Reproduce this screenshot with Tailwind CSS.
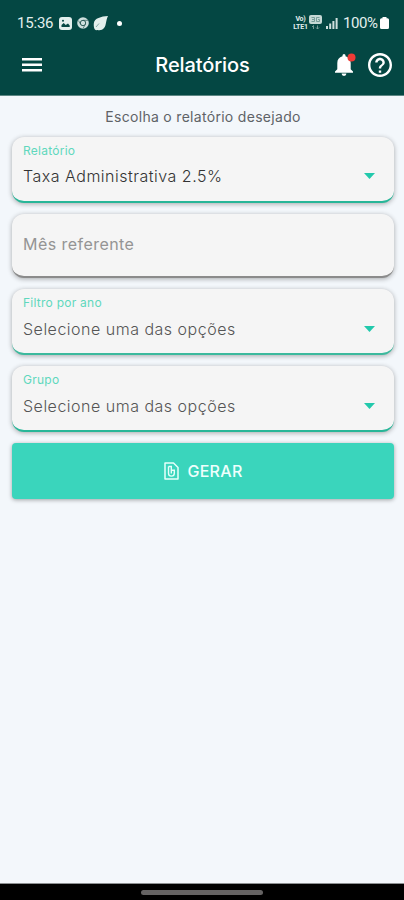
<!DOCTYPE html>
<html lang="pt-BR">
<head>
  <meta charset="UTF-8" />
  <meta name="viewport" content="width=device-width, initial-scale=1.0" />
  <title>Relatórios</title>
  <script src="https://cdn.jsdelivr.net/npm/@tailwindcss/browser@4"></script>
</head>
<body class="bg-[#f3f7fb] font-['Inter',sans-serif]">
  <div class="h-[900px] flex flex-col overflow-hidden">

    <header class="h-24 shrink-0 bg-[#044743] text-white border-b border-[#5d8784]">
      <!-- Status bar -->
      <div class="h-[46px] pl-[17px] pr-[15px] flex items-center justify-between text-[#e3efed]">
        <div class="flex items-center">
          <span class="w-[37px] font-['Roboto',sans-serif] text-[15px] leading-none tracking-[-0.2px] whitespace-nowrap">15:36</span>
          <svg class="ml-[5px] w-[13px] h-[13px]" viewBox="0 0 13 13">
            <rect width="13" height="13" rx="3" fill="currentColor" />
            <path d="M2.5 10V8l2.2-2 2 2L9 6.500l1.700 2V10z" fill="#044743" />
            <circle cx="4" cy="3.800" r="1" fill="#044743" />
          </svg>
          <svg class="ml-[5px] w-3 h-3" viewBox="0 0 12 12">
            <circle cx="6" cy="6" r="5.800" fill="#cfe0de" />
            <circle cx="6" cy="6" r="2.700" fill="none" stroke="#315f5b" stroke-width="1" />
            <path d="M6 3.300h5M3.700 7.300 1.400 3.500M8.300 7.400 6 11.500" stroke="#315f5b" stroke-width=".7" />
          </svg>
          <svg class="ml-1 w-[15px] h-[15px]" viewBox="0 0 15 15">
            <path d="M15 0C8 .5 1.500 2 .8 7.500c-.2 2 .1 4 .7 5.500.9 1.200 2 1.300 3 1 2.500.5 5 0 6.500-2C13.500 9.200 12.600 5 15 0z" fill="currentColor" />
            <path d="M3 11 6 7.500" stroke="#6d9692" stroke-width=".8" />
          </svg>
          <span class="ml-[9px] w-[5px] h-[5px] rounded-full bg-white"></span>
        </div>
        <div class="flex items-center">
          <div class="w-[17px] flex flex-col items-center gap-px font-['Roboto',sans-serif] font-bold text-[7px] leading-[7px] tracking-[-0.2px]">
            <span>Vo)</span>
            <span>LTE1</span>
          </div>
          <svg class="w-[13px] h-[15px] mb-[2px]" viewBox="0 0 13 15">
            <rect y="0" width="13" height="9" rx="2" fill="#c5d8d5" />
            <path d="M2.500 2.500h3v2h-2.500M5.500 4.500v2h-3M10.500 2.500h-3v4h3v-2h-1.500" fill="none" stroke="#6d9692" stroke-width=".9" />
            <path d="M4.500 14v-3.500M3 12l1.500-1.500M8.500 10.500V14M7 12.500 8.500 14 10 12.500" fill="none" stroke="#7fa29e" stroke-width=".9" />
          </svg>
          <svg class="ml-[4px] w-3 h-[11px]" viewBox="0 0 12 11" fill="#cfe0de">
            <rect x="0" y="8" width="2" height="3" />
            <rect x="3.200" y="5.500" width="2" height="5.500" />
            <rect x="6.400" y="3" width="2" height="8" />
            <rect x="9.600" y="0" width="2" height="11" />
          </svg>
          <span class="ml-[5px] w-[37px] font-['Roboto',sans-serif] text-[15px] leading-none tracking-[-0.4px] whitespace-nowrap">100%</span>
          <svg class="w-[9px] h-3" viewBox="0 0 9 12">
            <path d="M2.500 0h4v1.300H7.500A1.500 1.500 0 0 1 9 2.800v7.700A1.500 1.500 0 0 1 7.500 12h-6A1.500 1.500 0 0 1 0 10.500V2.800a1.500 1.500 0 0 1 1.500-1.500h1z" fill="#fff" />
          </svg>
        </div>
      </div>

      <!-- App bar -->
      <div class="h-[38px] pl-[22px] pr-3 grid grid-cols-[60px_1fr_60px] items-center">
        <svg class="w-5 h-4" viewBox="0 0 20 16" fill="#fff">
          <rect y="1" width="20" height="2.500" />
          <rect y="6.500" width="20" height="2.500" />
          <rect y="12" width="20" height="2.500" />
        </svg>
        <h1 class="pr-[9px] text-center text-xl leading-none font-medium tracking-[-0.1px]">Relatórios</h1>
        <div class="flex items-center justify-end gap-[11px]">
          <svg class="w-[23px] h-6 shrink-0" viewBox="0 0 23 24">
            <path d="M8.500 2.500a1.500 1.500 0 0 1 3 0v.8c3.500.8 5.200 3.300 5.200 6.700v6.200l2.300 2.300v1.200H1v-1.200l2.300-2.300V10C3.300 6.600 5 4.100 8.500 3.300z" fill="#fff" />
            <path d="M7.600 20.500h4.800a2.400 2.400 0 0 1-4.800 0z" fill="#fff" />
            <circle cx="17.500" cy="4.500" r="4" fill="#ef3b36" />
          </svg>
          <svg class="w-6 h-6 shrink-0" viewBox="2 2 20 20" fill="#fff">
            <path d="M11 16.500h2v2h-2zM12 2C6.480 2 2 6.480 2 12s4.480 10 10 10 10-4.480 10-10S17.520 2 12 2zm0 18c-4.410 0-8-3.590-8-8s3.590-8 8-8 8 3.590 8 8-3.590 8-8 8zm0-14c-2.210 0-4 1.790-4 4h2c0-1.100.9-2 2-2s2 .9 2 2c0 2-3 1.750-3 5h2c0-2.250 3-2.500 3-5 0-2.210-1.790-4-4-4z" />
          </svg>
        </div>
      </div>
    </header>

    <main class="flex-1 pl-3 pr-[10px] pt-[11px]">
      <p class="h-5 text-center text-[14px] leading-5 tracking-[0.3px] text-[#5f6367]">Escolha o relatório desejado</p>

      <div class="mt-[10px] flex flex-col gap-[11px]">
        <div class="h-[66px] px-[11px] pt-[6px] flex flex-col bg-[#f5f5f5] rounded-xl border-b-2 border-[#27b698] shadow-[0_1px_5px_rgba(0,0,0,0.32)]">
          <span class="text-xs leading-4 tracking-[0.25px] text-[#5fd8bd]">Relatório</span>
          <div class="mt-[7px] pr-[8px] flex items-center justify-between">
            <span class="text-base leading-5 font-light tracking-[0.5px] text-[#333]">Taxa Administrativa 2.5%</span>
            <svg class="w-[11px] h-[6px]" viewBox="0 0 11 6"><path d="M0 0h11L5.500 6z" fill="#22c9ac" /></svg>
          </div>
        </div>

        <div class="h-[64px] px-[11px] pb-[2px] flex items-center bg-[#f5f5f5] rounded-xl border-b-2 border-[#8b8b8b] shadow-[0_1px_5px_rgba(0,0,0,0.32)]">
          <span class="text-base leading-5 tracking-[0.45px] text-[#949494]">Mês referente</span>
        </div>

        <div class="h-[66px] px-[11px] pt-[6px] flex flex-col bg-[#f5f5f5] rounded-xl border-b-2 border-[#3cb99d] shadow-[0_1px_5px_rgba(0,0,0,0.32)]">
          <span class="text-xs leading-4 tracking-[0.25px] text-[#5fd8bd]">Filtro por ano</span>
          <div class="mt-2 pr-[8px] flex items-center justify-between">
            <span class="text-base leading-5 font-light tracking-[0.5px] text-[#555]">Selecione uma das opções</span>
            <svg class="w-[11px] h-[6px]" viewBox="0 0 11 6"><path d="M0 0h11L5.500 6z" fill="#22c9ac" /></svg>
          </div>
        </div>

        <div class="h-[66px] px-[11px] pt-[6px] flex flex-col bg-[#f5f5f5] rounded-xl border-b-2 border-[#27b698] shadow-[0_1px_5px_rgba(0,0,0,0.32)]">
          <span class="text-xs leading-4 tracking-[0.25px] text-[#5fd8bd]">Grupo</span>
          <div class="mt-2 pr-[8px] flex items-center justify-between">
            <span class="text-base leading-5 font-light tracking-[0.5px] text-[#555]">Selecione uma das opções</span>
            <svg class="w-[11px] h-[6px]" viewBox="0 0 11 6"><path d="M0 0h11L5.500 6z" fill="#22c9ac" /></svg>
          </div>
        </div>

        <button class="h-14 pl-px flex items-center justify-center gap-2 rounded bg-[#3ad5bc] text-[#effffc] shadow-[0_1px_4px_rgba(0,0,0,0.35)]">
          <svg class="w-[15px] h-[18px]" viewBox="0 0 15 18" fill="none" stroke="#e6fffa" stroke-width="1.500">
            <path d="M1 1h8.500L14 5.500V17H1z" stroke-linejoin="round" />
            <path d="M4.500 4.500v6.700a2.900 2.900 0 0 0 5.800 0V8.300h-3v3.200M7.300 8V4.500H4.500" stroke-width="1.400" />
          </svg>
          <span class="text-base leading-5 font-medium tracking-[0.3px]">GERAR</span>
        </button>
      </div>
    </main>

    <!-- Gesture bar -->
    <footer class="h-[17px] shrink-0 flex justify-center pt-[6px] bg-black border-t border-[#8d9092]">
      <div class="w-[122px] h-[5px] rounded-full bg-[#656363]"></div>
    </footer>
  </div>
</body>
</html>
